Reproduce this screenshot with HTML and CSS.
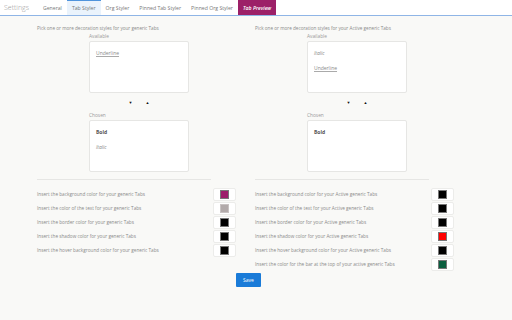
FILE: index.html
```html
<!DOCTYPE html>
<html lang="en">
<head>
    <meta charset="UTF-8">
    <meta name="viewport" content="width=device-width, initial-scale=1.0">
    <title>Settings</title>
    <link rel="stylesheet" href="styles.css">
</head>
<body>
    <header class="topbar">
        <div class="brand">Settings</div>
        <nav class="tabs">
            <a class="tab">General</a>
            <a class="tab active">Tab Styler</a>
            <a class="tab">Org Styler</a>
            <a class="tab">Pinned Tab Styler</a>
            <a class="tab">Pinned Org Styler</a>
            <a class="tab preview">Tab Preview</a>
        </nav>
    </header>

    <main class="content">
        <div class="columns">
            <section class="column">
                <p class="intro">Pick one or more decoration styles for your generic Tabs</p>
                <div class="picker">
                    <div class="label">Available</div>
                    <ul class="list">
                        <li class="underline">Underline</li>
                    </ul>
                    <div class="arrows">
                        <span class="arrow">&#9660;</span>
                        <span class="arrow">&#9650;</span>
                    </div>
                    <div class="label">Chosen</div>
                    <ul class="list">
                        <li class="bold">Bold</li>
                        <li class="italic">Italic</li>
                    </ul>
                </div>
                <hr class="divider">
                <div class="color-row">
                    <span>Insert the background color for your generic Tabs</span>
                    <span class="swatch"><span class="chip purple"></span></span>
                </div>
                <div class="color-row">
                    <span>Insert the color of the text for your generic Tabs</span>
                    <span class="swatch"><span class="chip grey"></span></span>
                </div>
                <div class="color-row">
                    <span>Insert the border color for your generic Tabs</span>
                    <span class="swatch"><span class="chip"></span></span>
                </div>
                <div class="color-row">
                    <span>Insert the shadow color for your generic Tabs</span>
                    <span class="swatch"><span class="chip"></span></span>
                </div>
                <div class="color-row">
                    <span>Insert the hover background color for your generic Tabs</span>
                    <span class="swatch"><span class="chip"></span></span>
                </div>
            </section>

            <section class="column">
                <p class="intro">Pick one or more decoration styles for your Active generic Tabs</p>
                <div class="picker">
                    <div class="label">Available</div>
                    <ul class="list">
                        <li class="italic">Italic</li>
                        <li class="underline">Underline</li>
                    </ul>
                    <div class="arrows">
                        <span class="arrow">&#9660;</span>
                        <span class="arrow">&#9650;</span>
                    </div>
                    <div class="label">Chosen</div>
                    <ul class="list">
                        <li class="bold">Bold</li>
                    </ul>
                </div>
                <hr class="divider">
                <div class="color-row">
                    <span>Insert the background color for your Active generic Tabs</span>
                    <span class="swatch"><span class="chip"></span></span>
                </div>
                <div class="color-row">
                    <span>Insert the color of the text for your Active generic Tabs</span>
                    <span class="swatch"><span class="chip"></span></span>
                </div>
                <div class="color-row">
                    <span>Insert the border color for your Active generic Tabs</span>
                    <span class="swatch"><span class="chip"></span></span>
                </div>
                <div class="color-row">
                    <span>Insert the shadow color for your Active generic Tabs</span>
                    <span class="swatch"><span class="chip red"></span></span>
                </div>
                <div class="color-row">
                    <span>Insert the hover background color for your Active generic Tabs</span>
                    <span class="swatch"><span class="chip"></span></span>
                </div>
                <div class="color-row">
                    <span>Insert the color for the bar at the top of your active generic Tabs</span>
                    <span class="swatch"><span class="chip green"></span></span>
                </div>
            </section>
        </div>

        <div class="actions">
            <button type="button" class="save">Save</button>
        </div>
    </main>
</body>
</html>
```

FILE: styles.css
```css
* {
    box-sizing: border-box;
    margin: 0;
    padding: 0;
    font-family: 'Open Sans', 'Noto Sans', sans-serif;
}

body {
    background-color: #f9f9f7;
    color: #777;
    width: 512px;
    height: 320px;
    overflow: hidden;
}

/* Top bar */
.topbar {
    display: flex;
    align-items: stretch;
    height: 16px;
    background-color: white;
    border-bottom: 1px solid #8fb5e6;
}

.brand {
    width: 38px;
    padding-left: 4px;
    font-size: 7px;
    font-weight: 300;
    line-height: 15px;
    color: #9a9a9a;
}

.tabs {
    display: flex;
}

.tab {
    padding: 0 5px;
    font-size: 5.15px;
    line-height: 14px;
    color: #777;
    border-top: 1px solid transparent;
}

.tab.active {
    background-color: #eaf3fc;
    border-top-color: #4f94dc;
}

.tab.preview {
    background-color: #9c2068;
    color: white;
    font-style: italic;
    font-weight: 600;
}

/* Content */
.content {
    padding: 8px 0 0 37px;
    width: 460px;
}

.columns {
    display: grid;
    grid-template-columns: 199px 199px;
    column-gap: 19px;
}

.intro {
    font-size: 4.65px;
    line-height: 8px;
    color: #8a8a8a;
}

.picker {
    margin-left: 52px;
    width: 100px;
}

.label {
    font-size: 4.8px;
    line-height: 8px;
    color: #9a9a9a;
}

.list {
    list-style: none;
    margin-top: 1px;
    height: 52px;
    padding: 7px 6px;
    background-color: white;
    border: 1px solid #e6e6e4;
    border-radius: 2px;
}

.list li {
    font-size: 5px;
    line-height: 8px;
    margin-bottom: 7px;
    color: #888;
}

.list .bold {
    font-weight: 700;
    color: #555;
}

.list .italic {
    font-style: italic;
}

.list .underline {
    text-decoration: underline;
    text-decoration-color: #aaa;
}

.arrows {
    display: flex;
    justify-content: center;
    gap: 13px;
    height: 18px;
    align-items: center;
}

.arrow {
    font-size: 4px;
    color: #111;
}

.divider {
    width: 174px;
    margin: 7px 0 7px;
    border: none;
    border-top: 1px solid #e6e6e4;
}

.color-row {
    display: flex;
    justify-content: space-between;
    align-items: center;
    height: 14px;
    font-size: 4.7px;
    color: #8a8a8a;
}

.swatch {
    display: flex;
    justify-content: center;
    align-items: center;
    width: 23px;
    height: 13px;
    background-color: white;
    border: 1px solid #ececea;
    border-radius: 2px;
}

.chip {
    width: 9px;
    height: 9px;
    background-color: #000;
    border: 1px solid #777;
}

.chip.purple {
    background-color: #9c1f6b;
}

.chip.grey {
    background-color: #b2aaaa;
    border-color: #c8c2c2;
}

.chip.red {
    background-color: #ff0000;
}

.chip.green {
    background-color: #0b5e3f;
}

.actions {
    display: flex;
    justify-content: center;
    margin-top: 2px;
}

.save {
    width: 25px;
    height: 14px;
    background-color: #1a7bd8;
    color: white;
    border: none;
    border-radius: 1px;
    font-size: 5px;
    cursor: pointer;
}
```
